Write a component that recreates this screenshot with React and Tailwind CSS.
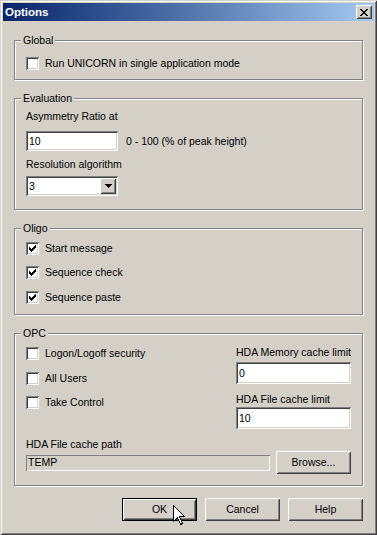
const sunken =
  "shadow-[inset_1px_1px_#808080,inset_-1px_-1px_#ffffff,inset_2px_2px_#404040,inset_-2px_-2px_#d4d0c8]";
const raised =
  "shadow-[inset_1px_1px_#ffffff,inset_-1px_-1px_#404040,inset_2px_2px_#d4d0c8,inset_-2px_-2px_#808080]";

const Group = ({ label, className = "", children }) => (
  <div
    className={`ml-[11px] w-[349px] border border-[#808080] shadow-[inset_1px_1px_#ffffff,1px_1px_#ffffff] ${className}`}
  >
    <div className="-mt-[7px] ml-[6px] h-[13px] w-fit bg-[#d4d0c8] px-[2px]">
      {label}
    </div>
    {children}
  </div>
);

const Check = ({ checked, label, className = "" }) => (
  <div className={`flex h-[13px] items-center gap-[6px] ${className}`}>
    <span
      className={`flex h-[13px] w-[13px] shrink-0 items-center justify-center bg-white ${sunken}`}
    >
      {checked && (
        <svg width="7" height="7" viewBox="0 0 7 7" shapeRendering="crispEdges">
          <path
            d="M6 0h1v1h-1z M5 1h2v1h-2z M0 2h1v1h-1z M4 2h3v1h-3z M0 3h2v1h-2z M3 3h3v1h-3z M0 4h5v1h-5z M1 5h3v1h-3z M2 6h1v1h-1z"
            fill="#000"
          />
        </svg>
      )}
    </span>
    <span>{label}</span>
  </div>
);

const Field = ({ value, className = "" }) => (
  <div className={`flex items-center bg-white pl-[3px] ${sunken} ${className}`}>
    {value}
  </div>
);

const Button = ({ children, isDefault, className = "" }) => (
  <div
    className={`relative flex h-[23px] w-[75px] items-center justify-center ${
      isDefault ? "border border-black" : ""
    } ${className}`}
  >
    <div className={`flex h-full w-full items-center justify-center ${raised}`}>
      {children}
    </div>
  </div>
);

export default function App() {
  return (
    <div className="h-[535px] w-[377px] whitespace-nowrap bg-[#d4d0c8] p-[3px] font-['Liberation_Sans',Arial,sans-serif] text-[10.5px] leading-[13px] text-black shadow-[inset_1px_1px_#d4d0c8,inset_-1px_-1px_#404040,inset_2px_2px_#ffffff,inset_-2px_-2px_#808080]">
      {/* title bar */}
      <div className="flex h-[18px] items-center justify-between bg-linear-to-r from-[#0a246a] to-[#a6caf0] pl-[2px] pr-[2px]">
        <span className="text-[11.5px] font-bold text-white">Options</span>
        <div className={`flex h-[14px] w-[16px] items-center justify-center bg-[#d4d0c8] ${raised}`}>
          <svg width="8" height="7" viewBox="0 0 8 7" shapeRendering="crispEdges">
            <path
              d="M0 0h2v1h-2z M6 0h2v1h-2z M1 1h2v1h-2z M5 1h2v1h-2z M2 2h4v1h-4z M3 3h2v1h-2z M2 4h4v1h-4z M1 5h2v1h-2z M5 5h2v1h-2z M0 6h2v1h-2z M6 6h2v1h-2z"
              fill="#000"
            />
          </svg>
        </div>
      </div>

      {/* Global */}
      <Group label="Global" className="mt-[19px] h-[40px]">
        <Check label="Run UNICORN in single application mode" className="ml-[11px] mt-[10px]" />
      </Group>

      {/* Evaluation */}
      <Group label="Evaluation" className="mt-[18px] h-[112px]">
        <div className="ml-[11px] mt-[5px]">Asymmetry Ratio at</div>
        <div className="ml-[11px] mt-[8px] flex items-center gap-[8px]">
          <Field value="10" className="h-[20px] w-[92px]" />
          <span>0 - 100 (% of peak height)</span>
        </div>
        <div className="ml-[11px] mt-[7px]">Resolution algorithm</div>
        <div className={`ml-[11px] mt-[5px] flex h-[20px] w-[92px] items-center bg-white p-[2px] ${sunken}`}>
          <span className="flex-1 pl-[1px]">3</span>
          <div className={`flex h-[16px] w-[16px] items-center justify-center bg-[#d4d0c8] ${raised}`}>
            <svg width="7" height="4" viewBox="0 0 7 4" shapeRendering="crispEdges">
              <path d="M0 0h7v1h-7z M1 1h5v1h-5z M2 2h3v1h-3z M3 3h1v1h-1z" fill="#000" />
            </svg>
          </div>
        </div>
      </Group>

      {/* Oligo */}
      <Group label="Oligo" className="mt-[18px] h-[87px]">
        <Check checked label="Start message" className="ml-[11px] mt-[7px]" />
        <Check checked label="Sequence check" className="ml-[11px] mt-[11px]" />
        <Check checked label="Sequence paste" className="ml-[11px] mt-[12px]" />
      </Group>

      {/* OPC */}
      <Group label="OPC" className="mt-[18px] h-[153px]">
        <div className="flex justify-between">
          <div className="ml-[11px]">
            <Check label="Logon/Logoff security" className="mt-[7px]" />
            <Check label="All Users" className="mt-[12px]" />
            <Check label="Take Control" className="mt-[11px]" />
          </div>
          <div className="mr-[11px] w-[115px]">
            <div className="mt-[6px]">HDA Memory cache limit</div>
            <Field value="0" className="mt-[3px] h-[22px]" />
            <div className="mt-[9px]">HDA File cache limit</div>
            <Field value="10" className="mt-[1px] h-[22px]" />
          </div>
        </div>
        <div className="ml-[11px] mt-[9px]">HDA File cache path</div>
        <div className="ml-[11px] flex h-[23px] items-center">
          <div className="flex h-[16px] w-[244px] items-center pl-[2px] shadow-[inset_1px_1px_#808080,inset_-1px_-1px_#ffffff]">
            TEMP
          </div>
          <Button className="ml-[6px]">Browse...</Button>
        </div>
      </Group>

      {/* buttons */}
      <div className="mt-[12px] flex justify-end gap-[8px] pr-[11px]">
        <Button isDefault>
          OK
          <svg
            className="absolute left-[50px] top-[6px]"
            width="12"
            height="21"
            viewBox="0 0 12 21"
            shapeRendering="crispEdges"
          >
            <path
              d="M0.5 0.5 V16.5 L4.5 12.5 L7.5 19.5 L9.5 18.5 L6.5 11.5 H11.5 Z"
              fill="#fff"
              stroke="#000"
              strokeWidth="1"
            />
          </svg>
        </Button>
        <Button>Cancel</Button>
        <Button>Help</Button>
      </div>
    </div>
  );
}
